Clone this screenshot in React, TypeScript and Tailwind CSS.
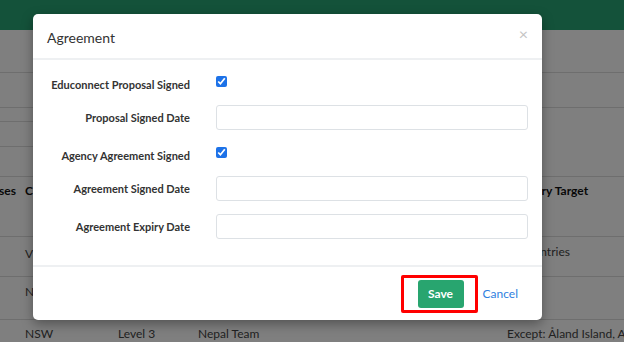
import React from 'react';

const font = { fontFamily: 'Lato, "Open Sans", sans-serif' };

function CheckRow({ label }: { label: string }) {
  return (
    <div className="flex h-[29px] items-start">
      <label className="w-[143px] shrink-0 pt-[2px] text-right text-[11px] leading-[14px] font-bold text-[#333]">
        {label}
      </label>
      <div className="ml-[26px] flex-1">
        <input type="checkbox" defaultChecked className="m-0 block h-[11px] w-[11px] accent-[#1d72e8]" />
      </div>
    </div>
  );
}

function FieldRow({ label }: { label: string }) {
  return (
    <div className="flex h-[25px] items-center">
      <label className="w-[143px] shrink-0 pt-[1px] text-right text-[11px] leading-[14px] font-bold text-[#333]">
        {label}
      </label>
      <div className="ml-[26px] flex-1">
        <input type="text" className="block h-[25px] w-full rounded-[3px] border border-[#dde1e5] bg-white px-2" />
      </div>
    </div>
  );
}

export default function App() {
  return (
    <div className="relative h-[342px] w-[624px] overflow-hidden bg-white text-[12px] text-[#444]" style={font}>
      {/* page behind the modal */}
      <div className="h-[30px] bg-[#29a574]" />
      <div className="h-[43px] border-b border-[#ddd]" />
      <div className="h-[35px] border-b border-[#ddd]" />
      <div className="flex h-[69px] border-b border-[#ddd]">
        <div className="w-[300px]">
          <div className="h-[14px] border-b border-[#ddd]" />
          <div className="h-[25px] border-b border-[#ddd]" />
        </div>
      </div>
      <div className="relative h-[60px] border-b border-[#ddd] font-bold text-[#111]">
        <span className="absolute right-[608px] top-[5px]">Courses</span>
        <span className="absolute left-[25px] top-[5px]">Campus</span>
        <span className="absolute left-[509px] top-[5px] whitespace-nowrap">Country Target</span>
      </div>
      <div className="relative h-[40px] border-b border-[#ddd]">
        <span className="absolute left-[25px] top-[8px]">VIC</span>
        <span className="absolute left-[502px] top-[6px] whitespace-nowrap">All Countries</span>
      </div>
      <div className="relative h-[43px] border-b border-[#ddd]">
        <span className="absolute left-[25px] top-[6px]">NSW</span>
      </div>
      <div className="relative h-[22px]">
        <span className="absolute left-[25px] top-[5px]">NSW</span>
        <span className="absolute left-[118px] top-[5px]">Level 3</span>
        <span className="absolute left-[198px] top-[5px]">Nepal Team</span>
        <span className="absolute left-[507px] top-[5px] whitespace-nowrap">Except: Åland Island, Albania</span>
      </div>

      {/* backdrop */}
      <div className="absolute inset-0 bg-black/50" />

      {/* modal */}
      <div className="absolute left-[33px] top-[14px] flex h-[306px] w-[509px] flex-col rounded-[5px] bg-white shadow-[0_4px_12px_rgba(0,0,0,0.35)]">
        <div className="flex h-[46px] items-center justify-between border-b-2 border-[#eef0f2] pl-[14px] pr-[14px]">
          <h2 className="pt-[2px] text-[14px] text-[#333]">Agreement</h2>
          <span className="pb-[4px] text-[16px] leading-none text-[#c4c4c4]">×</span>
        </div>
        <div className="flex flex-col px-[14px] pt-[16px]">
          <CheckRow label="Educonnect Proposal Signed" />
          <FieldRow label="Proposal Signed Date" />
          <div className="mt-[17px]">
            <CheckRow label="Agency Agreement Signed" />
          </div>
          <FieldRow label="Agreement Signed Date" />
          <div className="mt-[13px]">
            <FieldRow label="Agreement Expiry Date" />
          </div>
        </div>
        <div className="mt-auto flex h-[55px] items-center justify-end gap-[5px] border-t-2 border-[#eef0f2] pr-[24px]">
          <div className="rounded-[2px] border-[3px] border-[#ff0000] bg-white py-[2px] pl-[14px] pr-[11px]">
            <button className="h-[28px] w-[46px] rounded-[3px] bg-[#28a56f] text-[12px] font-bold text-white">
              Save
            </button>
          </div>
          <a className="text-[12px] text-[#2f7fe0]">Cancel</a>
        </div>
      </div>
    </div>
  );
}
